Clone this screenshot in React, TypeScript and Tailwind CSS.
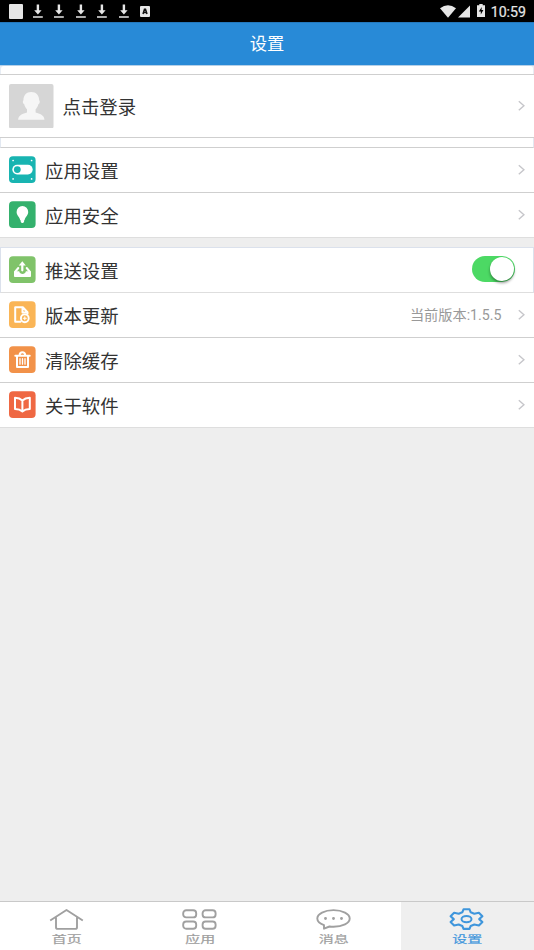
import type { ReactNode } from "react";

const Chevron = () => (
  <svg className="-mt-[2px] h-[11px] w-[8px] shrink-0" viewBox="0 0 8 11" fill="none" stroke="#c6c6ca" strokeWidth="1.400">
    <path d="M1.800 1.200 6.900 5.700 1.800 10.200" />
  </svg>
);

const Download = () => (
  <svg className="mt-[1px] h-[15px] w-[10px]" viewBox="0 0 10 15" fill="#e6e6e6">
    <path d="M3.700.5h2.400v5.700h2.500L4.900 10.500 1.200 6.200h2.500zM0 12.300h9.800v1.500H0z" />
  </svg>
);

const StatusBar = () => (
  <div className="flex h-[22px] items-center justify-between bg-black pl-[9px] pr-2">
    <div className="flex items-center">
      <div className="mr-[9.500px] h-[15px] w-[14px] rounded-[1px] bg-[#e6e6e6]" />
      <div className="flex gap-[11.500px]">
        <Download />
        <Download />
        <Download />
        <Download />
        <Download />
      </div>
      <svg className="ml-[11.500px] h-[11px] w-[10px]" viewBox="0 0 10 11">
        <rect width="10" height="11" rx="1" fill="#e6e6e6" />
        <path d="M3 8 4.500 3.200h1L7 8M3.500 6.500h3" fill="none" stroke="#111" strokeWidth="1.500" />
      </svg>
    </div>
    <div className="flex items-center text-[#e6e6e6]">
      <svg className="mr-[2px] h-[13px] w-[16px]" viewBox="0 0 16 13" fill="currentColor">
        <path d="M0 3.200Q8-2.600 16 3.200L8 12.800z" />
      </svg>
      <svg className="mr-[7px] h-[13px] w-[12px]" viewBox="0 0 12 13" fill="currentColor">
        <path d="M12 .6v12H0z" />
      </svg>
      <svg className="-mt-[2px] mr-[6px] h-[13px] w-[8px]" viewBox="0 0 8 13">
        <path d="M2.300 0h3.400v1.300H8V13H0V1.300h2.300z" fill="currentColor" />
        <path d="M4.800 3 1.800 7.500h2v3l2.600-4.400H4.500z" fill="#000" />
      </svg>
      <span className="mt-[1px] font-[Roboto,sans-serif] text-[14.200px] leading-[20px] [-webkit-text-stroke:0.2px]">10:59</span>
    </div>
  </div>
);

const TileIcon = ({ color, children }: { color: string; children: ReactNode }) => (
  <svg className="-mt-[1px] h-[27px] w-[27px] shrink-0" viewBox="0 0 27 27" fill="none" stroke="#fff" strokeLinecap="round" strokeLinejoin="round">
    <rect y=".3" width="26.600" height="26.700" rx="4" fill={color} stroke="none" />
    {children}
  </svg>
);

type RowProps = { icon: ReactNode; label: string; right?: ReactNode; frame?: string };

const Row = ({ icon, label, right, frame = "h-[45px] border-b border-[#cfcfcf] px-[9px]" }: RowProps) => (
  <div className={`flex items-center bg-white ${frame}`}>
    {icon}
    <span className="ml-[9px] flex-1 pt-[2px] text-[18.400px] leading-[27px] text-[#333]">{label}</span>
    {right ?? <Chevron />}
  </div>
);

const Tab = ({ label, active = false, children }: { label: string; active?: boolean; children: ReactNode }) => (
  <div className={`flex flex-1 flex-col items-center pt-[6px] ${active ? "bg-[#efefef] text-[#3f96dc]" : "text-[#a0a0a0]"}`}>
    <svg className="mr-[1px] h-[23px] w-[35px]" viewBox="0 0 35 23" fill="none" stroke="currentColor" strokeWidth="1.900" strokeLinejoin="round">
      {children}
    </svg>
    <span className="-mt-[0.500px] h-[18px] origin-center scale-y-[0.660] text-[15px] leading-[18px] [-webkit-text-stroke:0.3px]">{label}</span>
  </div>
);

export default function App() {
  return (
    <div className="flex h-[950px] w-[534px] flex-col overflow-hidden bg-[#eee] font-[Roboto,'Noto_Sans_CJK_SC',sans-serif]">
      <StatusBar />
      <header className="flex h-[43px] items-center justify-center border-t border-[#2378bd] bg-[#288ad7] text-[17.300px] leading-[26px] text-white">
        设置
      </header>
      <main className="flex-1">
        <div className="h-[10px] border-b border-t border-b-[#cfcfcf] border-t-[#b5d0e8] bg-[#e7edf4] px-[1px]">
          <div className="h-full rounded-t-[3px] bg-white" />
        </div>
        <div className="flex h-[63px] items-center border-b border-[#cfcfcf] bg-white px-[9px]">
          <svg className="h-[44.500px] w-[44.500px]" viewBox="0 0 45 45">
            <rect width="45" height="45" rx="2" fill="#d6d6d6" />
            <path d="M22.500 8.200c5 0 8 3.500 8 8.300 1 .6.8 3.500-.8 4-.6 2.600-1.800 4.100-2.800 5v3.200c4 1.500 8.800 2.200 9 7.500H9.200c.2-5.300 5-6 9-7.500v-3.200c-1-.9-2.200-2.400-2.800-5-1.600-.5-1.800-3.400-.8-4 0-4.800 2.900-8.300 7.900-8.300z" fill="#f6f6f6" />
          </svg>
          <span className="ml-[9px] flex-1 pt-[2px] text-[18.400px] leading-[27px] text-[#333]">点击登录</span>
          <Chevron />
        </div>
        <div className="h-[10px] border-x border-b border-x-[#e2e8f1] border-b-[#cfcfcf] bg-white" />

        <Row
          label="应用设置"
          icon={
            <TileIcon color="#18b4b1">
              <rect x="3.300" y="8.800" width="20.400" height="9.600" rx="4.800" fill="#fff" stroke="none" />
              <circle cx="8.300" cy="13.600" r="3.400" fill="#18b4b1" stroke="none" />
              <path d="M4.100 4.500h.01M22.600 4.500h.01M4.100 22.900h.01M22.600 22.900h.01" strokeWidth="1.700" />
            </TileIcon>
          }
        />
        <Row
          label="应用安全"
          frame="h-[45px] border-b border-[#dedede] px-[9px]"
          icon={
            <TileIcon color="#34b16d">
              <path d="M13.400 5a5.900 5.900 0 0 1 5.800 6c0 3.700-3.100 4.600-3.600 8.300h-4.400c-.5-3.700-3.600-4.600-3.600-8.300a5.900 5.900 0 0 1 5.800-6zM11.700 19.300h3.400v1.400l-1 1.300h-1.400l-1-1.300z" fill="#fff" stroke="none" />
            </TileIcon>
          }
        />
        <Row
          label="推送设置"
          frame="mt-[9px] h-[46px] border border-[#dbe1ec] border-b-[#dedede] px-[8px]"
          icon={
            <TileIcon color="#80c36a">
              <path d="M13.300 14.300V8" strokeWidth="2.200" />
              <path d="M9.800 9.600 13.300 5.300l3.500 4.300z" fill="#fff" stroke="none" />
              <path d="M9.300 12 6 16v4h15v-4l-3.300-4" strokeWidth="2" />
              <path d="M5.600 15.300h4.600c.6 3.500 6.100 3.500 6.700 0h4.600v5.200h-16z" fill="#fff" stroke="none" />
            </TileIcon>
          }
          right={
            <div className="-mt-[2px] mr-[10px] flex h-[26px] w-[43.500px] items-center justify-end rounded-full bg-[#4cd964] pr-[1px]">
              <div className="h-[24px] w-[24px] rounded-full bg-white shadow-[0_2px_3px_rgba(0,0,0,0.4)]" />
            </div>
          }
        />
        <Row
          label="版本更新"
          icon={
            <TileIcon color="#fab556">
              <path d="M11.500 20.700H6.200V6.200h7.600l4.700 5v1.500M13.500 6.400v5h5" strokeWidth="2" />
              <circle cx="15.800" cy="17.300" r="3.900" fill="#fab556" strokeWidth="1.900" />
              <path d="M14.300 17.300h3M15.800 15.800v3" strokeWidth="1.100" />
            </TileIcon>
          }
          right={
            <>
              <span className="mr-[15.500px] text-[14.200px] leading-[20px] text-[#999]">当前版本:1.5.5</span>
              <Chevron />
            </>
          }
        />
        <Row
          label="清除缓存"
          icon={
            <TileIcon color="#f29249">
              <path d="M6.300 9.800h14.400M10.600 9c.3-3.600 5.300-3.600 5.600 0M8 10.500V21h11V10.500" strokeWidth="2" />
              <path d="M11 12.700v5.500M13.500 12.700v5.500M16 12.700v5.500" strokeWidth="1.300" />
            </TileIcon>
          }
        />
        <Row
          label="关于软件"
          frame="h-[45px] border-b border-[#dedede] px-[9px]"
          icon={
            <TileIcon color="#ef6843">
              <path d="M13.400 9.500v10.500M6 6.800c3 .1 5.400.8 7.400 2.700 2-1.900 4.400-2.600 7.400-2.700v11.200c-3 .1-5.400.7-7.400 2.400-2-1.700-4.400-2.300-7.400-2.400z" strokeWidth="2" />
            </TileIcon>
          }
        />
      </main>
      <nav className="flex h-[49px] border-t border-[#c9c9c9] bg-white">
        <Tab label="首页">
          <path d="M1.200 12.500 17.500 2l16.300 10.500M7 9.500v10c0 .8.700 1.400 1.700 1.400h17.600c1 0 1.700-.6 1.700-1.400v-10" />
        </Tab>
        <Tab label="应用">
          <rect x="1.200" y="2.200" width="13" height="7.200" rx="3" />
          <rect x="20.600" y="2.200" width="13" height="7.200" rx="3" />
          <rect x="1.200" y="13.500" width="13" height="7.200" rx="3" />
          <rect x="20.600" y="13.500" width="13" height="7.200" rx="3" />
        </Tab>
        <Tab label="消息">
          <path d="M8 20.700v-3.600C3.800 15.600 1.300 13.400 1.300 10.500c0-4.700 7.200-8.400 16.200-8.400s16.200 3.700 16.200 8.400-7.200 8.300-16.200 8.300c-1.400 0-2.700-.1-4-.3z" />
          <path d="M9.500 10.500h.01M17.500 10.500h.01M25.500 10.500h.01" strokeWidth="2.900" strokeLinecap="round" />
        </Tab>
        <Tab label="设置" active>
          <path d="M14.500 1.300h6l1.200 3 3.600 1.400 4.600-1 3.500 3.500-3.200 2.900 3.200 2.900-3.500 3.500-4.600-1-3.600 1.400-1.200 3h-6l-1.200-3-3.600-1.400-4.600 1L1.600 14l3.200-2.900L1.600 8.200l3.500-3.500 4.600 1 3.600-1.400z" strokeWidth="2.100" />
          <ellipse cx="17.500" cy="11.100" rx="5" ry="3.200" strokeWidth="2" />
        </Tab>
      </nav>
    </div>
  );
}
